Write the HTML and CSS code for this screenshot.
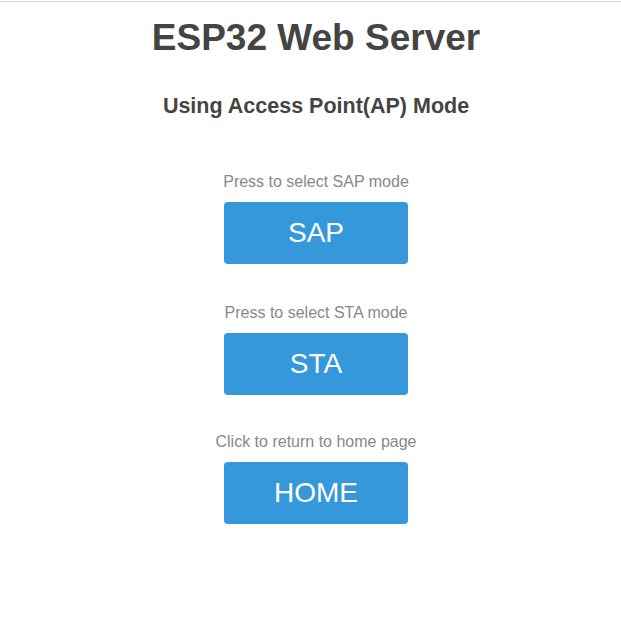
FILE: index.html
```html
<!DOCTYPE html>
<html>
<head>
<meta charset="utf-8">
<link rel="stylesheet" href="styles.css">
</head>
<body>
<div class="topline"></div>
<main class="page">
  <h1 class="title">ESP32 Web Server</h1>
  <h3 class="subtitle">Using Access Point(AP) Mode</h3>
  <section class="group group-first">
    <p class="hint">Press to select SAP mode</p>
    <button class="btn">SAP</button>
  </section>
  <section class="group group-second">
    <p class="hint">Press to select STA mode</p>
    <button class="btn">STA</button>
  </section>
  <section class="group group-third">
    <p class="hint">Click to return to home page</p>
    <button class="btn">HOME</button>
  </section>
</main>
</body>
</html>
```
FILE: styles.css
```css
html, body {
  margin: 0;
  padding: 0;
  background: #fff;
  font-family: "Liberation Sans", Arial, sans-serif;
}
body {
  padding-top: 1px;
}
.topline {
  height: 1px;
  background: #d8d8d8;
}
.page {
  display: flex;
  flex-direction: column;
  align-items: center;
  text-align: center;
  padding-left: 11px;
}
.title {
  margin: 15px 0 0;
  font-size: 37px;
  line-height: 42px;
  font-weight: bold;
  color: #444;
}
.subtitle {
  margin: 35px 0 0;
  font-size: 21.5px;
  line-height: 24px;
  font-weight: bold;
  color: #444;
}
.group {
  display: flex;
  flex-direction: column;
  align-items: center;
}
.group-first {
  margin-top: 55px;
}
.group-second {
  margin-top: 40px;
}
.group-third {
  margin-top: 38px;
}
.hint {
  margin: 0 0 11px;
  font-size: 16px;
  line-height: 18px;
  color: #888;
}
.btn {
  width: 184px;
  height: 62px;
  border: none;
  border-radius: 4px;
  background: #3498db;
  color: #fff;
  font-family: "Liberation Sans", Arial, sans-serif;
  font-size: 28px;
  padding: 0;
}
```
